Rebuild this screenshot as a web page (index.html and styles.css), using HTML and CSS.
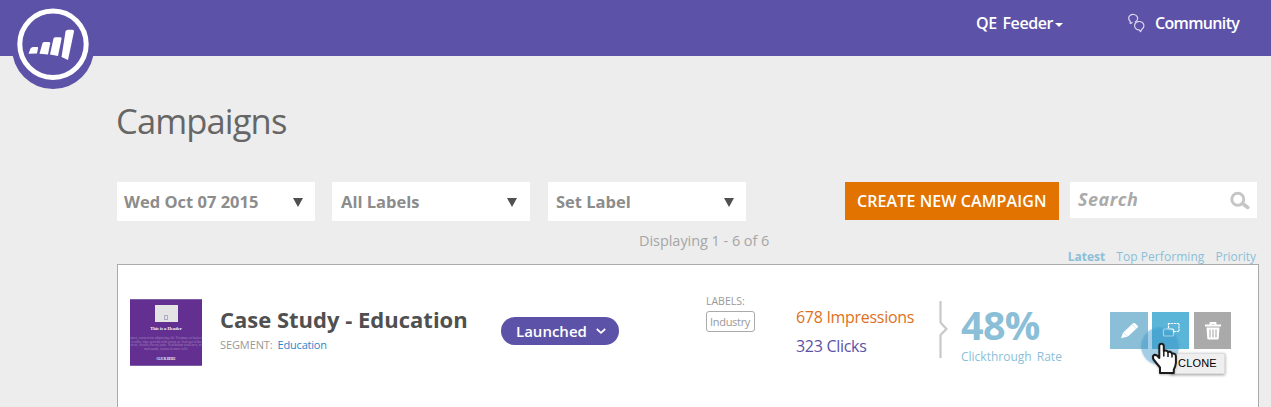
FILE: index.html
```html
<!DOCTYPE html>
<html lang="en">
<head>
<meta charset="utf-8">
<title>Campaigns</title>
<link rel="stylesheet" href="styles.css">
</head>
<body>
<header class="topbar">
  <svg class="logo" width="84" height="92" viewBox="0 0 84 92" aria-label="Logo">
    <circle cx="42" cy="48" r="41" fill="#5c52a7"/>
    <circle cx="42" cy="44.3" r="33.2" fill="none" stroke="#fff" stroke-width="5"/>
    <g fill="#fff">
      <path d="M19.500 48.500Q20.500 47 22 47H26.500Q27.500 47 27 48.500L26 53.500L17.500 53.700Z"/>
      <path d="M31.500 43Q32 42 33.500 42H38.200Q39.500 42 39.200 43.500L37 54.500L28.500 53.700Z"/>
      <path d="M42.500 38.500Q43 37.200 44.500 37.200H49.500Q51 37.200 50.500 39L47 56L39 54.500Z"/>
      <path d="M54.500 31.500Q55 29.800 57 29.800H61.500Q63.300 29.800 63 31.500L57 60L50.500 57Z"/>
    </g>
  </svg>
  <nav class="nav">
    <a class="user"><span>QE Feeder</span><i class="caret"></i></a>
    <a class="community">
      <svg width="18" height="20" viewBox="0 0 18 20" fill="none" stroke="#dcd9ee" stroke-width="1.200">
        <path d="M3.200 10.800V8.300A4.500 3.900 0 1 1 7.800 9"/>
        <path d="M13.600 18.600L12 16.900A4.700 4.200 0 1 1 15 16.100Z"/>
        <path d="M3.200 10.800L5.500 9.300"/>
      </svg>
      <span>Community</span>
    </a>
  </nav>
</header>
<main class="page">
  <h1 class="title">Campaigns</h1>
  <div class="toolbar">
    <div class="select date"><span>Wed Oct 07 2015</span><i class="arrow"></i></div>
    <div class="select all"><span>All Labels</span><i class="arrow"></i></div>
    <div class="select set"><span>Set Label</span><i class="arrow"></i></div>
    <button class="create"><span>CREATE NEW CAMPAIGN</span></button>
    <div class="search">
      <span>Search</span>
      <svg width="22" height="20" viewBox="0 0 22 20" fill="none" stroke="#c6c6c6">
        <circle cx="8.800" cy="8.200" r="6" stroke-width="3"/>
        <path d="M13.500 12.500L18.800 16.500" stroke-width="3.500" stroke-linecap="round"/>
      </svg>
    </div>
  </div>
  <div class="count"><span>Displaying 1 - 6 of 6</span></div>
  <div class="sort"><b>Latest</b><a class="s-top">Top Performing</a><a>Priority</a></div>
  <section class="card">
    <div class="thumb">
      <div class="pic"><i></i></div>
      <div class="thumb-head">This is a Header</div>
      <div class="thumb-copy"><span>amet, consectetur adipiscing elit. Vivamus eu laoreet</span><span>et nulla, vitae gravida nibh cursus ut. Sed eget tellus</span><span>sit ac, iaculis viverra justo. Vestibulum risus arcu, ut</span><span>malesuada, cursus sit amet velit.</span></div>
      <div class="thumb-cta">CLICK HERE</div>
    </div>
    <div class="info">
      <h2>Case Study - Education</h2>
      <div class="segment"><span>SEGMENT:</span><a>Education</a></div>
    </div>
    <div class="status"><span>Launched</span>
      <svg width="12" height="8" viewBox="0 0 12 8" fill="none" stroke="#fff" stroke-width="1.700"><path d="M1.800 2L6 5.800L10.200 2"/></svg>
    </div>
    <div class="labels"><div class="caption">LABELS:</div><div class="tag"><span>Industry</span></div></div>
    <div class="stats"><div class="impressions">678 Impressions</div><div class="clicks">323 Clicks</div></div>
    <svg class="brace" width="10" height="60" viewBox="0 0 10 60" fill="none" stroke="#c9c9c9" stroke-width="2.200"><path d="M2.500 1V22.500L8.500 29L2.500 35V58"/></svg>
    <div class="rate"><div class="pct">48%</div><div class="rate-name">Clickthrough Rate</div></div>
    <div class="actions">
      <a class="edit"><svg width="38" height="37" viewBox="0 0 38 37"><path d="M11 26.300L13 20.700L23 11.300Q24 10.500 24.900 11.300L27.700 13.800Q28.300 14.600 27.600 15.500L18 24.500Z" fill="#fff"/><path d="M22 12.500L26.500 17M13.500 20.500L17.800 24.500" stroke="#8bbfd8" stroke-width=".4"/></svg></a>
      <a class="clone"><svg width="37" height="37" viewBox="0 0 37 37" fill="none" stroke="#fff" stroke-width="1.200"><rect x="16.500" y="11.500" width="10.500" height="8" stroke-dasharray="2 .7"/><rect x="11.500" y="17" width="10" height="7" rx="1" fill="#5bb5d8"/></svg></a>
      <a class="remove"><svg width="37" height="37" viewBox="0 0 37 37" fill="none" stroke="#fff"><path d="M11 13.500H27M16.500 13V11H21.500V13" stroke-width="1.800"/><path d="M12.500 15.500H25.500L24.700 26.500Q24.500 27.600 23.500 27.600H14.500Q13.500 27.600 13.300 26.500Z" fill="#fff" stroke="none"/><path d="M16 17.500V25.500M19 17.500V25.500M22 17.500V25.500" stroke="#aaa" stroke-width="1.100"/></svg></a>
      <div class="tooltip"><span>CLONE</span></div>
      <svg class="pointer" width="38" height="50" viewBox="0 0 38 50">
        <circle cx="19" cy="19" r="19" fill="#3ea9e6" fill-opacity=".4"/>
        <path d="M19 40.500L12.500 32.500Q11 29 13.200 27.800Q16 27.500 18.300 31V19Q18.500 16.800 20.400 16.800Q22.500 16.800 22.800 19V24Q25.500 22.500 27 25Q29.800 23.800 31 26.500Q34.800 26 34.900 29.500V36Q34.500 39.500 32.800 42.500V46H19Z" fill="#fff" stroke="#1c1c1c" stroke-width="2" stroke-linejoin="round"/>
        <path d="M22.800 23V29.500M27 25V30M31 26.500V30.500" stroke="#1c1c1c" stroke-width="1.500"/>
      </svg>
    </div>
  </section>
</main>
</body>
</html>
```
FILE: styles.css
```css
* { box-sizing: border-box; }
body { margin: 0; height: 407px; overflow: hidden; background: #ededed; font-family: "Open Sans", sans-serif; white-space: nowrap; }
h1, h2 { margin: 0; }
.topbar { height: 56px; background: #5c52a7; display: flex; justify-content: space-between; padding: 0 32px 0 11px; }
.logo { display: block; flex: none; position: relative; z-index: 1; }
.nav { display: flex; height: 46px; align-items: center; color: #fff; font-size: 16px; font-weight: 600; }
.nav a { display: flex; align-items: center; }
.user { width: 151px; letter-spacing: -.4px; word-spacing: 2px; }
.caret { margin: 4px 0 0 2px; border: 4.500px solid transparent; border-top-color: #fff; border-bottom: 0; }
.community { width: 112px; gap: 10px; letter-spacing: -.65px; }
.community svg { flex: none; }
.page { padding: 0 12px 0 117px; }
.title { height: 126px; margin-left: -1px; padding-top: 41px; line-height: 48px; font-size: 34.500px; font-weight: 400; letter-spacing: -.85px; color: #666; }
.toolbar { display: flex; align-items: flex-start; height: 39px; }
.select { width: 198px; height: 39px; display: flex; align-items: center; justify-content: space-between; background: #fff; color: #8c8c8c; font-size: 16.500px; font-weight: 700; }
.date { margin-right: 17px; padding: 0 12px 0 7px; }
.all { margin-right: 18px; padding: 0 13px 0 9px; }
.set { padding: 0 12px 0 8px; }
.arrow { border: 5.500px solid transparent; border-top: 9px solid #505050; border-bottom: 0; margin-top: 1px; }
.create { width: 214px; height: 38px; margin-left: 99px; padding: 0 0 0 12px; border: 0; background: #e27300; color: #fff; font: 600 16px/39px "Open Sans", sans-serif; letter-spacing: .1px; text-align: left; }
.search { width: 187px; height: 36px; margin-left: 11px; padding: 0 6px 0 8px; display: flex; align-items: center; justify-content: space-between; background: #fff; color: #aaa; font-size: 18px; font-style: italic; font-weight: 700; letter-spacing: .5px; }
.search span { margin-top: -2px; }
.search svg { margin-top: 2px; }
.count { height: 27px; padding: 8px 0 0 522px; font-size: 14.500px; line-height: 24px; letter-spacing: -.05px; color: #a6a6a6; }
.sort { height: 16px; display: flex; justify-content: flex-end; gap: 11px; padding-right: 3px; font-size: 12px; line-height: 18px; color: #8bbfd8; }
.s-top { letter-spacing: .06px; }
.card { height: 160px; border: 1px solid #aaa; background: #fff; display: flex; align-items: flex-start; padding: 34px 0 0 12px; }
.thumb { width: 72px; height: 67px; overflow: hidden; background: #632f91; border-block: 1px solid #8061a8; color: #fff; text-align: center; font-family: "Liberation Serif", serif; }
.pic { width: 23px; height: 17px; margin: 5px auto 0; background: #e4e4e4; display: flex; align-items: flex-end; justify-content: center; padding-bottom: 2px; }
.pic i { width: 4px; height: 5px; border: 1px solid #b4a8c8; }
.thumb-head { height: 15px; font-size: 4.500px; line-height: 13px; font-weight: 700; }
.thumb-copy { height: 16px; font-size: 3.400px; line-height: 3.600px; color: #a183bd; display: flex; flex-direction: column; align-items: center; }
.thumb-cta { font-size: 3px; line-height: 13px; font-weight: 700; }
.info { width: 281px; margin-left: 18px; }
.info h2 { height: 38px; padding-top: 3px; font-size: 22px; line-height: 34px; color: #505050; }
.segment { display: flex; gap: 5px; font-size: 11px; line-height: 16px; letter-spacing: -.1px; color: #999; }
.segment a { color: #2b86cc; letter-spacing: -.2px; }
.status { width: 118px; height: 28px; margin: 18px 87px 0 0; padding: 0 12px 0 15px; border-radius: 14px; background: #5c52a7; color: #fff; display: flex; align-items: center; justify-content: space-between; font-size: 15px; font-weight: 600; }
.labels { width: 90px; color: #999; }
.caption { height: 12px; font-size: 10.500px; line-height: 5px; }
.tag { width: 49px; height: 21px; padding-left: 3px; border: 1px solid #aaa; border-radius: 3px; font-size: 11px; line-height: 19px; letter-spacing: -.3px; }
.stats { width: 142px; font-size: 16px; line-height: 29px; padding-top: 4px; letter-spacing: -.3px; color: #5c52a7; }
.impressions { color: #dd711b; }
.brace { margin-top: 1px; flex: none; }
.rate { width: 149px; margin-left: 13px; color: #8bbfd8; }
.pct { height: 48px; font-size: 39.500px; line-height: 53px; font-weight: 700; letter-spacing: -.7px; }
.rate-name { font-size: 12px; line-height: 20px; word-spacing: 2px; }
.actions { display: flex; margin-top: 13px; position: relative; }
.actions a { height: 37px; }
.actions a svg { display: block; }
.edit { width: 38px; margin-right: 4px; background: #8bbfd8; }
.clone { width: 37px; margin-right: 5px; background: #5bb5d8; }
.remove { width: 37px; background: #aaa; }
.tooltip { position: absolute; left: 60px; top: 41px; width: 55px; height: 21px; padding-left: 7px; background: #efefef; border: 1px solid #ddd; box-shadow: 0 1px 3px rgba(0,0,0,.4); font: 11px/19px "Liberation Sans", sans-serif; letter-spacing: .2px; color: #000; }
.pointer { position: absolute; left: 31px; top: 15px; filter: drop-shadow(0 1px 1px rgba(0,0,0,.25)); }
```
